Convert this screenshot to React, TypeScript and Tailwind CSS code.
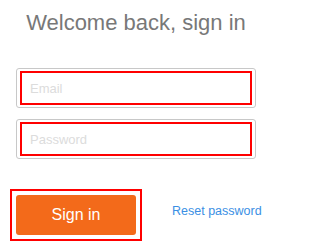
export default function App() {
  return (
    <div className="w-[281px] h-[248px] bg-white font-['Liberation_Sans',Arial,sans-serif] pl-[10px]">
      <div className="ml-[6px] w-[240px]">
        <h1 className="pt-[10px] text-center text-[22px] leading-[26px] text-[#787878]">
          Welcome back, sign in
        </h1>
        <div className="mt-[32px] flex flex-col gap-[11px]">
          <div className="h-[40px] rounded-[3px] border border-[#c8c8c8] px-[3px] py-[2px]">
            <input
              type="email"
              placeholder="Email"
              className="h-full w-full border-2 border-[#ff0000] bg-white pl-[8px] text-[13px] text-[#333] outline-none placeholder:text-[#dcdcdc]"
            />
          </div>
          <div className="h-[40px] rounded-[3px] border border-[#c8c8c8] px-[3px] py-[2px]">
            <input
              type="password"
              placeholder="Password"
              className="h-full w-full border-2 border-[#ff0000] bg-white pl-[8px] text-[13px] text-[#333] outline-none placeholder:text-[#dcdcdc]"
            />
          </div>
        </div>
      </div>
      <div className="mt-[30px] flex items-start">
        <div className="border-2 border-[#ff0000] p-[4px]">
          <button className="h-[40px] w-[120px] rounded-[3px] bg-[#f36a1a] text-[16px] text-white">
            Sign in
          </button>
        </div>
        <a href="#" className="ml-[30px] mt-[15px] text-[12.5px] leading-[15px] text-[#3b8fe4]">
          Reset password
        </a>
      </div>
    </div>
  );
}
